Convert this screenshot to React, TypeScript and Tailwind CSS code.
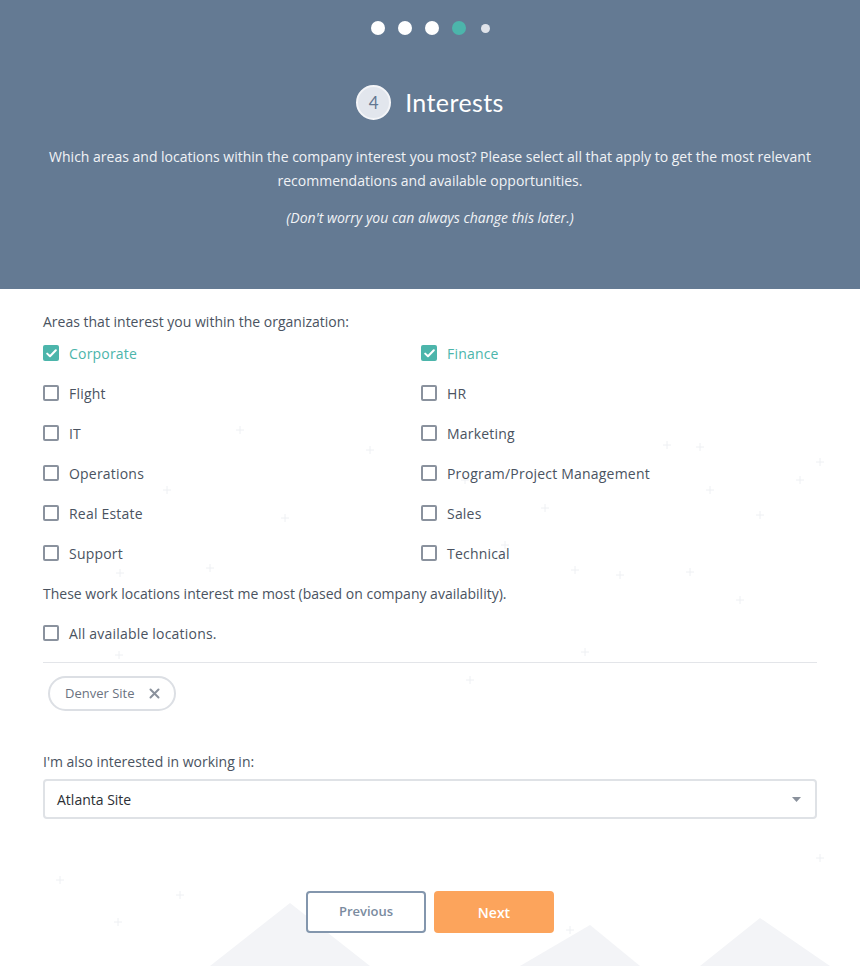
import { useState } from 'react'

const areas = [
    ['Corporate', 'Finance'],
    ['Flight', 'HR'],
    ['IT', 'Marketing'],
    ['Operations', 'Program/Project Management'],
    ['Real Estate', 'Sales'],
    ['Support', 'Technical'],
]

// faint "+" marks scattered over the white part of the page
const pluses = [
    [240, 430], [370, 450], [667, 445], [985, 450], [820, 462], [700, 447],
    [167, 490], [465, 480], [710, 490], [545, 508], [760, 515], [800, 480],
    [285, 518], [575, 570], [690, 572], [119, 655], [470, 680], [585, 652],
    [620, 575], [740, 600], [120, 573], [210, 568], [505, 545],
    [180, 895], [118, 922], [570, 930], [820, 858], [60, 880],
]

function Checkbox({ label, checked, onToggle }: { label: string; checked: boolean; onToggle: () => void }) {
    return (
        <button type="button" onClick={onToggle} className="flex h-10 items-center gap-[10px] text-left">
            {checked ? (
                <span className="flex h-4 w-4 items-center justify-center rounded-[2px] bg-[#4cb5ab]">
                    <svg width="11" height="9" viewBox="0 0 11 9" fill="none">
                        <path d="M1.2 4.6 4 7.3 9.8 1.3" stroke="white" strokeWidth="2" strokeLinecap="round" strokeLinejoin="round" />
                    </svg>
                </span>
            ) : (
                <span className="h-4 w-4 rounded-[2px] border-2 border-[#8a929e] bg-white" />
            )}
            <span className={`text-[14px] tracking-[0.2px] ${checked ? 'text-[#4cb5ab]' : 'text-[#4a5361]'}`}>{label}</span>
        </button>
    )
}

export default function App() {
    const [checked, setChecked] = useState<Record<string, boolean>>({ Corporate: true, Finance: true })
    const [allLocations, setAllLocations] = useState(false)
    const toggle = (k: string) => setChecked((c) => ({ ...c, [k]: !c[k] }))

    return (
        <div className="relative min-h-[966px] w-[860px] overflow-hidden bg-white font-['Open_Sans',sans-serif]">
            <div className="pointer-events-none absolute inset-0">
                <svg width="860" height="966" className="absolute left-0 top-0">
                    <polygon points="210,966 290,903 370,966" fill="#f3f4f7" />
                    <polygon points="520,966 590,925 640,966" fill="#f3f4f7" />
                    <polygon points="700,966 760,918 830,966" fill="#f3f4f7" />
                    {pluses.map(([x, y], i) => (
                        <g key={i} stroke="#eef0f3" strokeWidth="1">
                            <line x1={x - 4} y1={y} x2={x + 4} y2={y} />
                            <line x1={x} y1={y - 4} x2={x} y2={y + 4} />
                        </g>
                    ))}
                </svg>
            </div>

            <header className="relative flex h-[289px] flex-col items-center bg-[#647a93] text-white">
                <div className="mt-[21px] flex items-center gap-[13px]">
                    <span className="h-[14px] w-[14px] rounded-full bg-white" />
                    <span className="h-[14px] w-[14px] rounded-full bg-white" />
                    <span className="h-[14px] w-[14px] rounded-full bg-white" />
                    <span className="h-[14px] w-[14px] rounded-full bg-[#4cb5ab]" />
                    <span className="ml-[2px] h-[9px] w-[9px] rounded-full bg-[#dfe3ea]" />
                </div>
                <div className="mt-[49px] flex items-center gap-[14px] pl-[2px] pr-[2px]">
                    <span className="flex h-[35px] w-[35px] items-center justify-center rounded-full border-2 border-[#f4f5f8] bg-[#e2e6ed] font-['Lato',sans-serif] text-[17px] text-[#637791]">
                        4
                    </span>
                    <h1 className="font-['Lato',sans-serif] text-[25px] tracking-[0.4px] text-white">Interests</h1>
                </div>
                <p className="mt-[23px] w-[780px] text-center text-[14px] leading-[24px] text-[#f1f3f6]">
                    Which areas and locations within the company interest you most? Please select all that apply to get the most relevant recommendations and available opportunities.
                </p>
                <p className="mt-[14px] text-center text-[14px] italic text-[#f1f3f6]">(Don't worry you can always change this later.)</p>
            </header>

            <main className="relative px-[43px] pt-[22px]">
                <p className="text-[14px] text-[#4a5361]">Areas that interest you within the organization:</p>
                <div className="mt-[1px] grid grid-cols-[378px_1fr]">
                    {areas.flat().map((a) => (
                        <Checkbox key={a} label={a} checked={!!checked[a]} onToggle={() => toggle(a)} />
                    ))}
                </div>
                <p className="flex h-10 items-center text-[14px] text-[#4a5361]">These work locations interest me most (based on company availability).</p>
                <Checkbox label="All available locations." checked={allLocations} onToggle={() => setAllLocations(!allLocations)} />

                <div className="mt-[9px] border-t border-[#e3e5e9]" />

                <div className="mt-[13px] ml-[5px] inline-flex h-[35px] items-center gap-[14px] rounded-full border-2 border-[#dcdfe4] bg-white pl-[15px] pr-[14px]">
                    <span className="text-[13px] text-[#6b7380]">Denver Site</span>
                    <svg width="11" height="11" viewBox="0 0 11 11">
                        <path d="M1.5 1.5 9.5 9.5M9.5 1.5 1.5 9.5" stroke="#8a919c" strokeWidth="2" strokeLinecap="round" />
                    </svg>
                </div>

                <p className="mt-[40px] text-[14px] text-[#4a5361]">I'm also interested in working in:</p>
                <div className="mt-[7px] flex h-[40px] items-center justify-between rounded-[4px] border-2 border-[#dfe2e6] bg-white pl-[12px] pr-[14px]">
                    <span className="text-[14px] text-[#2c2f35]">Atlanta Site</span>
                    <svg width="9" height="5" viewBox="0 0 9 5">
                        <path d="M0 0h9L4.5 5z" fill="#8a919c" />
                    </svg>
                </div>

                <div className="mt-[72px] flex justify-center gap-[8px]">
                    <button type="button" className="h-[42px] w-[120px] rounded-[4px] border-2 border-[#8396ad] bg-white text-[13px] font-semibold text-[#7a8ba0]">
                        Previous
                    </button>
                    <button type="button" className="h-[42px] w-[120px] rounded-[4px] bg-[#fca45c] text-[14px] font-semibold text-white">
                        Next
                    </button>
                </div>
            </main>
        </div>
    )
}
